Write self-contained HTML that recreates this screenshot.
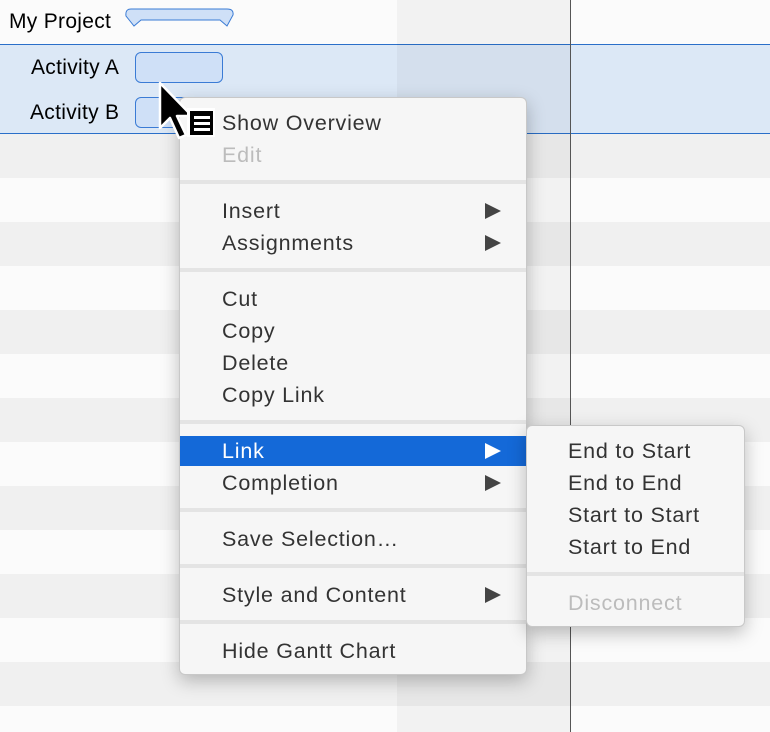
<!DOCTYPE html>
<html><head><meta charset="utf-8"><style>
*{margin:0;padding:0;box-sizing:border-box}
html,body{width:770px;height:732px;overflow:hidden}
body{position:relative;background:#fff;font-family:"Liberation Sans",Helvetica,Arial,sans-serif;}
.row{position:absolute;left:0;width:770px;height:44px}
.g{background:#f0f0f0}.w{background:#fbfbfb}
.band{position:absolute;left:397px;width:173px;top:0;height:732px;background:rgba(0,0,0,0.035)}
.vline{position:absolute;left:570px;top:0;width:1px;height:732px;background:#555}
.sel{position:absolute;left:0;top:44px;width:770px;height:90px;background:#dce8f6;border-top:1px solid #2a6fc9;border-bottom:1px solid #2a6fc9}
.lbl{position:absolute;font-size:21px;color:#000;letter-spacing:0.3px}
.bar{position:absolute;background:#cfe0f7;border:1px solid #3a7bd5;border-radius:6px}
.menu{position:absolute;background:#f6f6f6;border:1px solid #c8c8c8;border-radius:6px;box-shadow:0 6px 18px rgba(0,0,0,0.25)}
.it{position:absolute;left:0;right:0;height:30px;font-size:21.5px;color:#333;line-height:30px;letter-spacing:0.8px;white-space:nowrap}
.it.d{color:#bcbcbc}
.it.h{background:#1469d8;color:#fff}
.sep{position:absolute;left:0;right:0;height:4px;background:#e4e4e4}
.arr{position:absolute;right:25px;top:7px;width:0;height:0;border-left:16px solid #444;border-top:8px solid transparent;border-bottom:8px solid transparent}
.h .arr{border-left-color:#fff}
</style></head><body>
<div class="row w" style="top:0"></div>
<div class="row g" style="top:134px"></div><div class="row w" style="top:178px"></div>
<div class="row g" style="top:222px"></div><div class="row w" style="top:266px"></div>
<div class="row g" style="top:310px"></div><div class="row w" style="top:354px"></div>
<div class="row g" style="top:398px"></div><div class="row w" style="top:442px"></div>
<div class="row g" style="top:486px"></div><div class="row w" style="top:530px"></div>
<div class="row g" style="top:574px"></div><div class="row w" style="top:618px"></div>
<div class="row g" style="top:662px"></div><div class="row w" style="top:706px;height:26px"></div>
<div class="sel"></div>
<div class="band"></div>
<div class="vline"></div>
<div class="lbl" style="left:9px;top:10px">My Project</div>
<svg style="position:absolute;left:124px;top:8px" width="112" height="26"><path d="M7 1 H103 Q110 1 109 7 L103 18 L96 12 H17 L10 18 L2 8 Q1 1 7 1Z" fill="#cfe0f7" stroke="#3a7bd5" stroke-width="1"/></svg>
<div class="lbl" style="left:31px;top:56px">Activity A</div>
<div class="bar" style="left:135px;top:52px;width:88px;height:31px"></div>
<div class="lbl" style="left:30px;top:101px">Activity B</div>
<div class="bar" style="left:135px;top:97px;width:88px;height:31px"></div>

<div class="menu" style="left:179px;top:97px;width:348px;height:578px">
 <div class="it" style="top:10px"><span style="margin-left:42px">Show Overview</span></div>
 <div class="it d" style="top:42px"><span style="margin-left:42px">Edit</span></div>
 <div class="sep" style="top:82px"></div>
 <div class="it" style="top:98px"><span style="margin-left:42px">Insert</span><i class="arr"></i></div>
 <div class="it" style="top:130px"><span style="margin-left:42px">Assignments</span><i class="arr"></i></div>
 <div class="sep" style="top:170px"></div>
 <div class="it" style="top:186px"><span style="margin-left:42px">Cut</span></div>
 <div class="it" style="top:218px"><span style="margin-left:42px">Copy</span></div>
 <div class="it" style="top:250px"><span style="margin-left:42px">Delete</span></div>
 <div class="it" style="top:282px"><span style="margin-left:42px">Copy Link</span></div>
 <div class="sep" style="top:322px"></div>
 <div class="it h" style="top:338px"><span style="margin-left:42px">Link</span><i class="arr"></i></div>
 <div class="it" style="top:370px"><span style="margin-left:42px">Completion</span><i class="arr"></i></div>
 <div class="sep" style="top:410px"></div>
 <div class="it" style="top:426px"><span style="margin-left:42px">Save Selection…</span></div>
 <div class="sep" style="top:466px"></div>
 <div class="it" style="top:482px"><span style="margin-left:42px">Style and Content</span><i class="arr"></i></div>
 <div class="sep" style="top:522px"></div>
 <div class="it" style="top:538px"><span style="margin-left:42px">Hide Gantt Chart</span></div>
</div>

<div class="menu" style="left:526px;top:425px;width:219px;height:202px">
 <div class="it" style="top:10px"><span style="margin-left:41px">End to Start</span></div>
 <div class="it" style="top:42px"><span style="margin-left:41px">End to End</span></div>
 <div class="it" style="top:74px"><span style="margin-left:41px">Start to Start</span></div>
 <div class="it" style="top:106px"><span style="margin-left:41px">Start to End</span></div>
 <div class="sep" style="top:146px"></div>
 <div class="it d" style="top:162px"><span style="margin-left:41px">Disconnect</span></div>
</div>

<svg style="position:absolute;left:155px;top:78px" width="64" height="66">
 <path d="M5 5 L5 50 L15 40 L24 60 L31 57 L22 38 L37 38 Z" fill="#000" stroke="#fff" stroke-width="2.5" stroke-linejoin="round"/>
 <rect x="32" y="30" width="28" height="29" fill="#fff"/>
 <rect x="35" y="33" width="23" height="24" fill="#000"/>
 <rect x="39" y="38" width="16" height="3" fill="#fff"/>
 <rect x="39" y="44" width="16" height="3" fill="#fff"/>
 <rect x="39" y="50" width="16" height="3" fill="#fff"/>
</svg>
</body></html>
